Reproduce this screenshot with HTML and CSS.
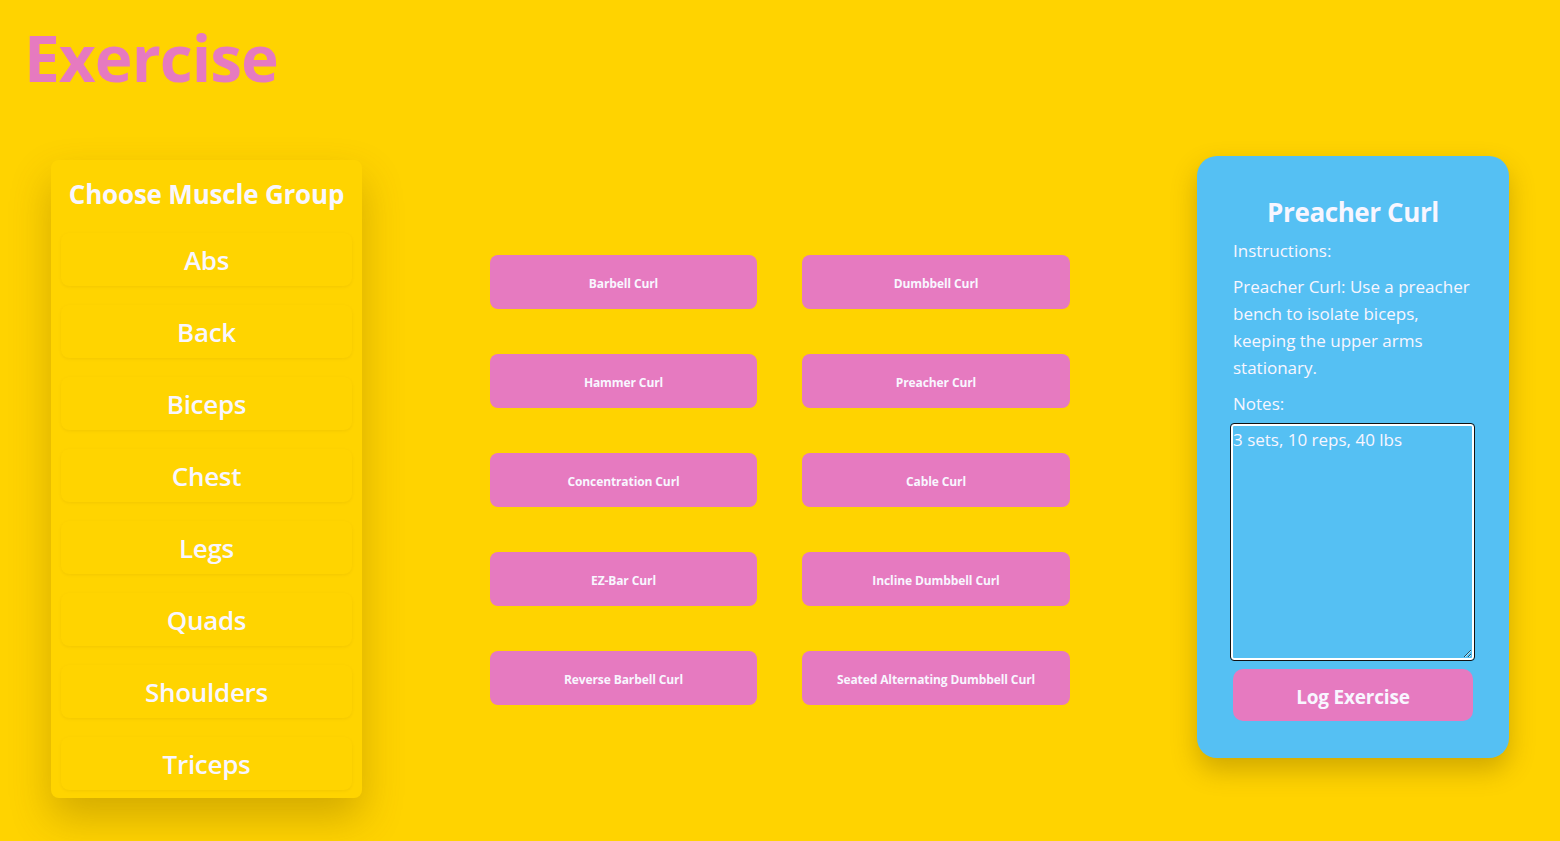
FILE: index.html
```html
<!DOCTYPE html>
<html lang="en">

<head>
    <meta charset="UTF-8">
    <title>Exercise</title>
    <link rel="stylesheet" href="styles.css">
</head>

<body>
    <h1 class="title">Exercise</h1>

    <div class="main">
        <div class="groups">
            <h2>Choose Muscle Group</h2>
            <ul class="group-list">
                <li>Abs</li>
                <li>Back</li>
                <li>Biceps</li>
                <li>Chest</li>
                <li>Legs</li>
                <li>Quads</li>
                <li>Shoulders</li>
                <li>Triceps</li>
            </ul>
        </div>

        <div class="exercises">
            <button>Barbell Curl</button>
            <button>Dumbbell Curl</button>
            <button>Hammer Curl</button>
            <button>Preacher Curl</button>
            <button>Concentration Curl</button>
            <button>Cable Curl</button>
            <button>EZ-Bar Curl</button>
            <button>Incline Dumbbell Curl</button>
            <button>Reverse Barbell Curl</button>
            <button>Seated Alternating Dumbbell Curl</button>
        </div>

        <div class="detail">
            <h2>Preacher Curl</h2>
            <p class="label">Instructions:</p>
            <p class="text">Preacher Curl: Use a preacher bench to isolate biceps, keeping the upper arms stationary.</p>
            <p class="label">Notes:</p>
            <textarea class="notes" spellcheck="false">3 sets, 10 reps, 40 lbs</textarea>
            <button class="log">Log Exercise</button>
        </div>
    </div>
</body>

</html>
```

FILE: styles.css
```css
* {
    margin: 0;
    padding: 0;
    box-sizing: border-box;
}

body {
    background: #ffd300;
    font-family: "Open Sans", "Noto Sans", sans-serif;
    color: #f8f6ff;
    height: 841px;
    overflow: hidden;
}

.title {
    color: #e67ac0;
    font-size: 64px;
    font-weight: 700;
    line-height: 80px;
    padding: 18px 0 0 24px;
    letter-spacing: -1px;
}

.main {
    display: flex;
    align-items: flex-start;
    padding-left: 51px;
    margin-top: 58px;
}

/* muscle groups */
.groups {
    width: 311px;
    margin-top: 4px;
    padding: 7px 10px 8px;
    border-radius: 8px;
    background: #ffd400;
    box-shadow: 0 20px 40px rgba(110, 80, 0, 0.3);
    text-align: center;
}

.groups h2 {
    font-size: 26px;
    line-height: 34px;
    font-weight: 700;
    letter-spacing: -0.2px;
    margin: 10px 0 22px;
}

.group-list {
    list-style: none;
    display: flex;
    flex-direction: column;
    gap: 19px;
}

.group-list li {
    height: 53px;
    line-height: 55px;
    font-size: 26px;
    font-weight: 600;
    letter-spacing: -0.3px;
    border-radius: 8px;
    box-shadow: 0 1px 3px rgba(160, 120, 0, 0.12);
}

/* exercise grid */
.exercises {
    display: grid;
    grid-template-columns: 267px 268px;
    grid-auto-rows: 54px;
    column-gap: 45px;
    row-gap: 45px;
    margin: 99px 0 0 128px;
}

.exercises button {
    border: none;
    border-radius: 8px;
    background: #e67ac0;
    color: #f8f6ff;
    font-family: inherit;
    font-size: 12px;
    font-weight: 700;
    letter-spacing: -0.1px;
    padding-top: 2px;
}

/* detail card */
.detail {
    width: 312px;
    margin-left: 127px;
    padding: 36px 36px 37px;
    border-radius: 20px;
    background: #55c0f3;
    box-shadow: 0 12px 26px rgba(110, 80, 0, 0.32);
}

.detail h2 {
    text-align: center;
    font-size: 26px;
    line-height: 40px;
    font-weight: 700;
    letter-spacing: -0.4px;
    margin-bottom: 5px;
}

.detail .label,
.detail .text {
    font-size: 17px;
    line-height: 27px;
    margin-bottom: 9px;
}

.notes {
    display: block;
    width: 243px;
    height: 236px;
    margin: -2px 0 9px -2px;
    background: #55c0f3;
    color: #f8f6ff;
    font-family: inherit;
    font-size: 17px;
    line-height: 27px;
    border: 2px solid #fff;
    outline: 1px solid #111;
    border-radius: 3px;
    padding: 0;
    resize: vertical;
}

.log {
    display: block;
    width: 240px;
    height: 52px;
    padding-top: 4px;
    border: none;
    border-radius: 10px;
    background: #e67ac0;
    color: #f8f6ff;
    font-family: inherit;
    font-size: 19px;
    font-weight: 700;
    letter-spacing: -0.2px;
}
```
